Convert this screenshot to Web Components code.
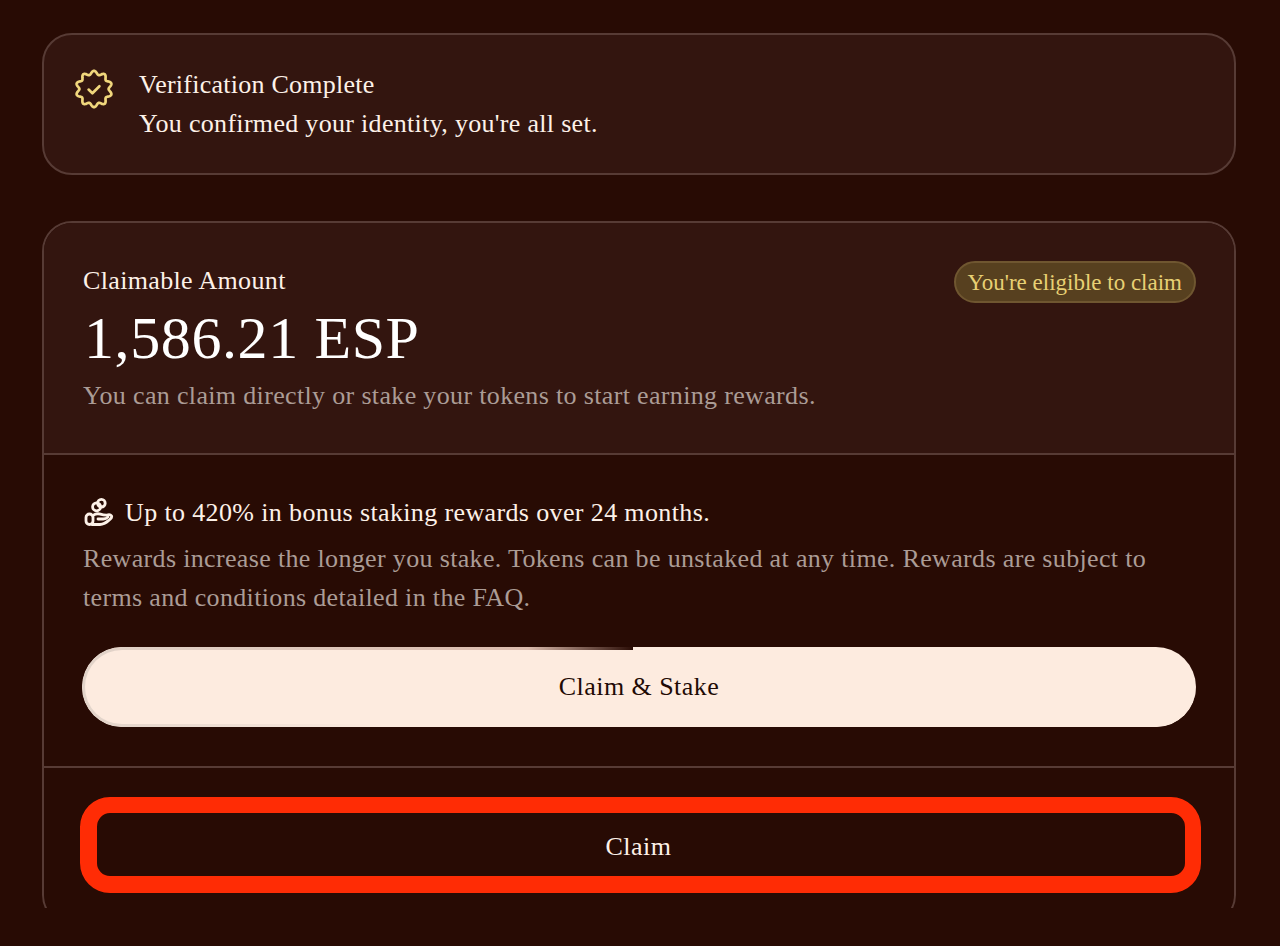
<!DOCTYPE html>
<html lang="en">
<head>
<meta charset="utf-8">
<title>Claim</title>
<style>
  html, body { margin: 0; padding: 0; }
  body {
    background: #280b04;
    color: #fdf1e8;
    font-family: "Liberation Serif", "Times New Roman", serif;
    height: 946px;
    overflow: hidden;
  }
</style>
</head>
<body>
<claim-page>
  <status-card>
    <verified-icon slot="icon"></verified-icon>
    <span slot="title">Verification Complete</span>
    You confirmed your identity, you're all set.
  </status-card>
  <claim-card amount="1,586.21 ESP"></claim-card>
</claim-page>

<script>
class ClaimPage extends HTMLElement {
  constructor() {
    super();
    this.attachShadow({ mode: "open" }).innerHTML = `
    <style>
      :host { display: flex; flex-direction: column; gap: 46px; padding: 33px 44px 0 42px; }
    </style>
    <slot></slot>`;
  }
}

class VerifiedIcon extends HTMLElement {
  constructor() {
    super();
    // scalloped badge, 10 lobes
    let d = "";
    for (let i = 0; i <= 200; i++) {
      const t = (i / 200) * Math.PI * 2;
      const r = 16.4 + 1.8 * Math.cos(10 * t);
      const x = 20 + r * Math.sin(t);
      const y = 20 - r * Math.cos(t);
      d += (i ? "L" : "M") + x.toFixed(2) + " " + y.toFixed(2);
    }
    this.attachShadow({ mode: "open" }).innerHTML = `
    <style>
      :host { display: block; width: 40px; height: 40px; }
      svg { display: block; }
    </style>
    <svg width="40" height="40" viewBox="0 0 40 40" fill="none" stroke="#f0d67c" stroke-width="2.7" stroke-linecap="round" stroke-linejoin="round">
      <path d="${d}Z"/>
      <path d="M14.6 20.6l3.8 3.6 7-7"/>
    </svg>`;
  }
}

class StakeIcon extends HTMLElement {
  constructor() {
    super();
    this.attachShadow({ mode: "open" }).innerHTML = `
    <style>
      :host { display: block; width: 30px; height: 30px; flex: none; }
      svg { display: block; }
    </style>
    <svg width="30" height="30" viewBox="0 0 30 30" fill="none" stroke="#fdf1e8" stroke-width="2.8" stroke-linecap="round" stroke-linejoin="round">
      <circle cx="17.4" cy="5.200" r="3.800"/>
      <circle cx="12.600" cy="8.800" r="4"/>
      <rect x="2" y="16" width="7" height="10.500" rx="3.500"/>
      <path d="M9 17.400c2.400-1.600 5-2 7.400-1.200 2 .7 4 1 6 1 1.600-.6 4-.9 5 .5.7 1.400-.2 2.800-1.600 3.800-2.200 1.800-4.800 4.900-9.800 5H8"/>
      <path d="M14 21h5.200c1.800 0 3.600-.8 4.800-2"/>
    </svg>`;
  }
}

class StatusCard extends HTMLElement {
  constructor() {
    super();
    this.attachShadow({ mode: "open" }).innerHTML = `
    <style>
      :host {
        display: flex; gap: 25px; box-sizing: border-box;
        height: 142px; padding: 31px 30px;
        background: #33150f;
        border: 2px solid #573b35;
        border-radius: 30px;
        font-size: 26px; line-height: 38.5px; letter-spacing: 0.31px;
      }
      .icon { flex: none; padding-top: 3px; }
      .title { letter-spacing: 0.25px; }
    </style>
    <div class="icon"><slot name="icon"></slot></div>
    <div>
      <div class="title"><slot name="title"></slot></div>
      <div><slot></slot></div>
    </div>`;
  }
}

class ClaimCard extends HTMLElement {
  constructor() {
    super();
    this.attachShadow({ mode: "open" }).innerHTML = `
    <style>
      :host { display: block; height: 687px; overflow: hidden; }
      .card {
        box-sizing: border-box; height: 704px;
        border: 2px solid #573b35; border-radius: 30px; overflow: hidden;
      }
      .top {
        box-sizing: border-box; height: 232px;
        background: #33150f; border-bottom: 2px solid #573b35;
        padding: 39px 38px 0; position: relative;
      }
      .label { font-size: 26px; line-height: 38px; letter-spacing: 0.35px; margin-left: 1px; }
      .amount { font-size: 60px; line-height: 76px; letter-spacing: 0.6px; color: #fff; margin-left: 2px; }
      .muted { color: #ab9c96; font-size: 26px; line-height: 38.5px; letter-spacing: 0.34px; margin-left: 1px; }
      .top .muted { margin-top: 1px; }
      .badge {
        position: absolute; top: 38px; right: 38px;
        box-sizing: border-box; height: 42px; padding: 2px 12px 0 11px;
        display: flex; align-items: center;
        background: #57401f; border: 2px solid #6f5630; border-radius: 21px;
        color: #e8d074; font-size: 23px;
      }
      .mid {
        box-sizing: border-box; height: 313px; padding: 39px 38px 0;
        border-bottom: 2px solid #573b35;
      }
      .head { display: flex; align-items: center; gap: 11px; font-size: 26px; line-height: 38px; letter-spacing: 0.37px; margin-left: 2px; }
      .primary {
        margin-top: 30px; height: 80px; border-radius: 40px;
        background: #fdebdf; color: #1f0a05;
        display: flex; align-items: center; justify-content: center;
        font-size: 26px; letter-spacing: 0.45px; position: relative;
      }
      .primary::before {
        content: ""; position: absolute; inset: 0; border-radius: 40px;
        padding: 3px 0 3px 3px;
        background:
          linear-gradient(90deg, #e2d4ca 0, #dcbcae 40%, #2a0c05 49.5%, transparent 49.5%) top / 100% 50% no-repeat,
          linear-gradient(90deg, #e2d4ca 0, #f6e5da 20%, #fdebdf 27%) bottom / 100% 50% no-repeat;
        -webkit-mask: linear-gradient(#000 0 0) content-box, linear-gradient(#000 0 0);
        -webkit-mask-composite: xor;
        mask-composite: exclude;
      }
      .bottom { padding: 29px 33px 0 36px; }
      .secondary {
        box-sizing: border-box; height: 96px; padding: 5px 5px 0 0;
        border: solid #ff2c05; border-width: 16px 16px 17px 17px; border-radius: 30px;
        display: flex; align-items: center; justify-content: center;
        font-size: 26px; letter-spacing: 0.5px;
      }
    </style>
    <div class="card">
      <div class="top">
        <div class="label">Claimable Amount</div>
        <div class="amount">${this.getAttribute("amount")}</div>
        <div class="muted">You can claim directly or stake your tokens to start earning rewards.</div>
        <div class="badge">You're eligible to claim</div>
      </div>
      <div class="mid">
        <div class="head"><stake-icon></stake-icon>Up to 420% in bonus staking rewards over 24 months.</div>
        <div class="muted" style="margin-top:8px">Rewards increase the longer you stake. Tokens can be unstaked at any time. Rewards are subject to terms and conditions detailed in the FAQ.</div>
        <div class="primary">Claim &amp; Stake</div>
      </div>
      <div class="bottom">
        <div class="secondary">Claim</div>
      </div>
    </div>`;
  }
}

customElements.define("verified-icon", VerifiedIcon);
customElements.define("stake-icon", StakeIcon);
customElements.define("status-card", StatusCard);
customElements.define("claim-card", ClaimCard);
customElements.define("claim-page", ClaimPage);
</script>
</body>
</html>
